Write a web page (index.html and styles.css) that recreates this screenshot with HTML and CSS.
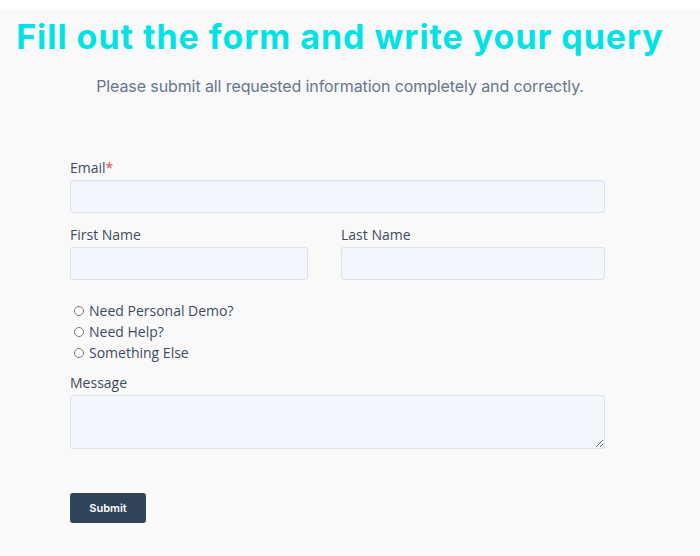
FILE: index.html
```html
<!DOCTYPE html>
<html lang="en">
<head>
<meta charset="utf-8">
<title>Contact form</title>
<link rel="stylesheet" href="styles.css">
</head>
<body>
<div class="page">
  <header class="intro">
    <h1 class="title">Fill out the form and write your query</h1>
    <p class="subtitle">Please submit all requested information completely and correctly.</p>
  </header>
  <form class="form">
    <div class="field">
      <label class="label" for="email">Email<span class="req">*</span></label>
      <input class="input" id="email" type="email">
    </div>
    <div class="row">
      <div class="field">
        <label class="label" for="fname">First Name</label>
        <input class="input" id="fname" type="text">
      </div>
      <div class="field">
        <label class="label" for="lname">Last Name</label>
        <input class="input" id="lname" type="text">
      </div>
    </div>
    <div class="radios">
      <label class="radio"><input type="radio" name="topic"><span>Need Personal Demo?</span></label>
      <label class="radio"><input type="radio" name="topic"><span>Need Help?</span></label>
      <label class="radio"><input type="radio" name="topic"><span>Something Else</span></label>
    </div>
    <div class="field message">
      <label class="label" for="msg">Message</label>
      <textarea class="input textarea" id="msg"></textarea>
    </div>
    <div class="actions">
      <button class="submit" type="button">Submit</button>
    </div>
  </form>
</div>
</body>
</html>
```
FILE: styles.css
```css
html, body {
  margin: 0;
  padding: 0;
  background: #ffffff;
}
body {
  font-family: "Inter", "Liberation Sans", sans-serif;
  padding-top: 10px;
}
.page {
  background: #f9f9f9;
  min-height: 546px;
  width: 100%;
  box-sizing: border-box;
  padding-top: 7px;
}
.intro {
  width: 680px;
  text-align: center;
}
.title {
  margin: 0;
  font-family: "Inter", sans-serif;
  font-weight: 700;
  font-size: 34px;
  line-height: 40px;
  color: #00e3e6;
  letter-spacing: 0.95px;
  white-space: nowrap;
}
.subtitle {
  margin: 17px 0 0;
  font-size: 16px;
  line-height: 24px;
  letter-spacing: -0.1px;
  color: #66758f;
}
.form {
  margin: 60px 0 0 70px;
  width: 535px;
  display: flex;
  flex-direction: column;
  padding-bottom: 30px;
}
.field {
  display: flex;
  flex-direction: column;
}
.label {
  font-family: "Open Sans", sans-serif;
  font-size: 14px;
  line-height: 20px;
  color: #3e4a5f;
  margin-bottom: 2px;
}
.req {
  color: #e5484d;
}
.input {
  box-sizing: border-box;
  height: 33px;
  background: #f3f7fb;
  border: 1px solid #dbe2ea;
  border-radius: 3px;
  margin: 0;
  font: inherit;
}
.row {
  display: grid;
  grid-template-columns: 238px 264px;
  column-gap: 33px;
  margin-top: 12px;
}
.radios {
  display: flex;
  flex-direction: column;
  margin-top: 20px;
  padding-left: 4px;
}
.radio {
  display: flex;
  align-items: center;
  font-family: "Open Sans", sans-serif;
  font-size: 14px;
  line-height: 21px;
  color: #3e4a5f;
}
.radio input {
  width: 10px;
  height: 10px;
  margin: 0 5px 0 0;
}
.message {
  margin-top: 10px;
}
.textarea {
  height: 54px;
  resize: vertical;
}
.actions {
  margin-top: 44px;
}
.submit {
  width: 76px;
  height: 30px;
  background: #2f4458;
  color: #ffffff;
  border: none;
  border-radius: 3px;
  font-family: "Inter", sans-serif;
  font-weight: 600;
  font-size: 11px;
  padding: 0;
}
```
